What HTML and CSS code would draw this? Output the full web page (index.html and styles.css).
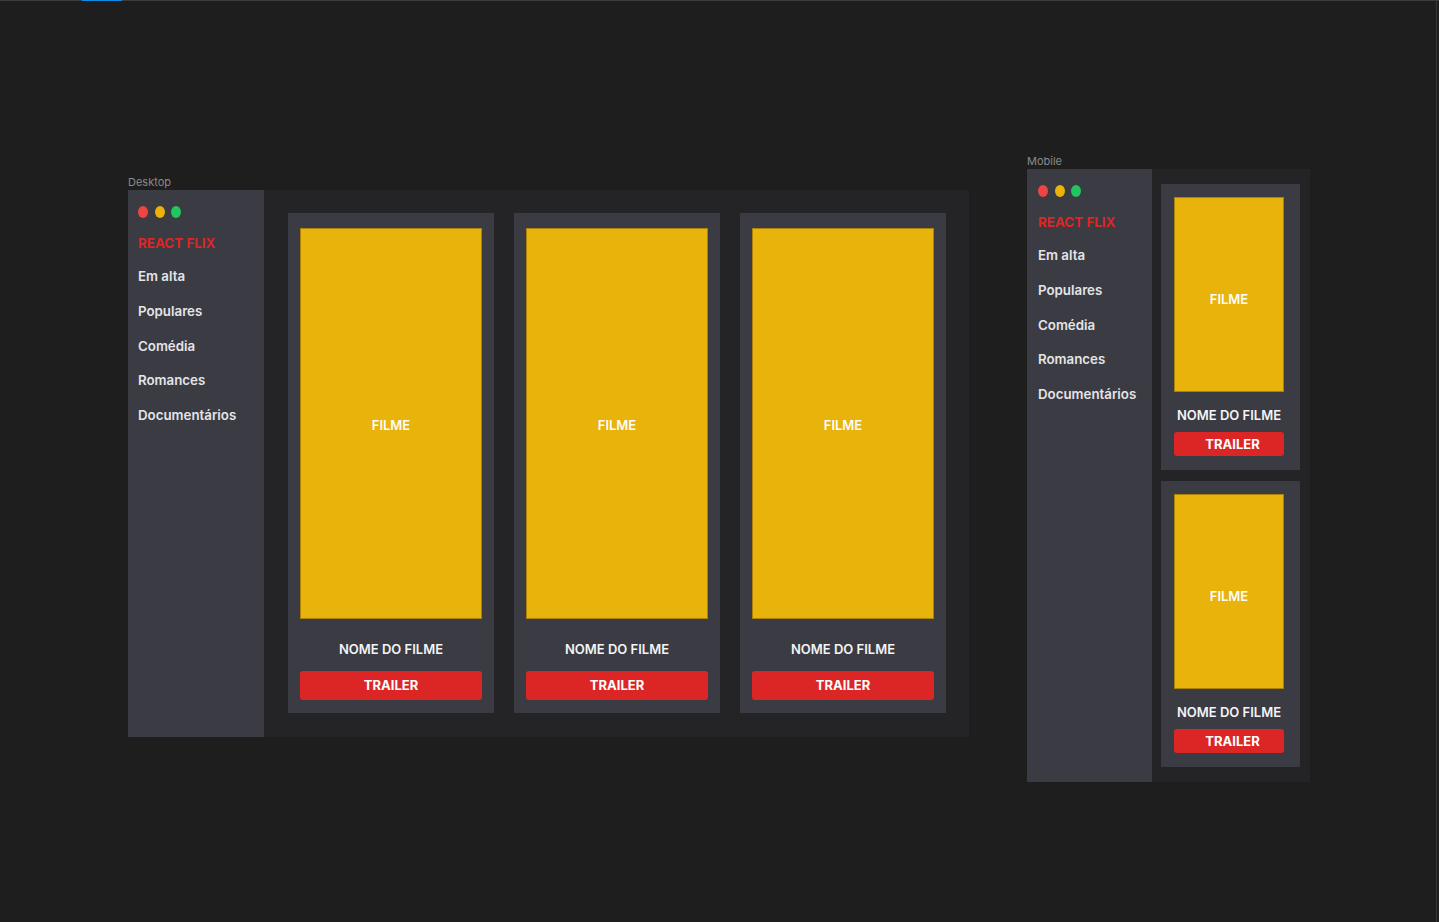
FILE: index.html
```html
<!DOCTYPE html>
<html lang="pt-BR">
<head>
<meta charset="utf-8">
<title>React Flix</title>
<link rel="stylesheet" href="styles.css">
</head>
<body>
<div class="topbar"><span class="topbar-active"></span></div>
<div class="edge-line"></div>
<div class="canvas">
  <section class="frame-wrap frame-wrap-desktop">
    <div class="frame-label">Desktop</div>
    <div class="frame frame-desktop">
      <aside class="sidebar">
        <div class="dots"><span class="dot dot-red"></span><span class="dot dot-yellow"></span><span class="dot dot-green"></span></div>
        <div class="brand">REACT FLIX</div>
        <nav class="menu">
          <a class="menu-item">Em alta</a>
          <a class="menu-item">Populares</a>
          <a class="menu-item">Comédia</a>
          <a class="menu-item">Romances</a>
          <a class="menu-item">Documentários</a>
        </nav>
      </aside>
      <main class="content content-desktop">
        <div class="card card-desktop">
          <div class="poster"><span>FILME</span></div>
          <div class="movie-name">NOME DO FILME</div>
          <button class="trailer">TRAILER</button>
        </div>
        <div class="card card-desktop">
          <div class="poster"><span>FILME</span></div>
          <div class="movie-name">NOME DO FILME</div>
          <button class="trailer">TRAILER</button>
        </div>
        <div class="card card-desktop">
          <div class="poster"><span>FILME</span></div>
          <div class="movie-name">NOME DO FILME</div>
          <button class="trailer">TRAILER</button>
        </div>
      </main>
    </div>
  </section>

  <section class="frame-wrap frame-wrap-mobile">
    <div class="frame-label">Mobile</div>
    <div class="frame frame-mobile">
      <aside class="sidebar sidebar-mobile">
        <div class="dots"><span class="dot dot-red"></span><span class="dot dot-yellow"></span><span class="dot dot-green"></span></div>
        <div class="brand">REACT FLIX</div>
        <nav class="menu">
          <a class="menu-item">Em alta</a>
          <a class="menu-item">Populares</a>
          <a class="menu-item">Comédia</a>
          <a class="menu-item">Romances</a>
          <a class="menu-item">Documentários</a>
        </nav>
      </aside>
      <main class="content content-mobile">
        <div class="card card-mobile">
          <div class="poster"><span>FILME</span></div>
          <div class="movie-name">NOME DO FILME</div>
          <button class="trailer">TRAILER</button>
        </div>
        <div class="card card-mobile">
          <div class="poster"><span>FILME</span></div>
          <div class="movie-name">NOME DO FILME</div>
          <button class="trailer">TRAILER</button>
        </div>
      </main>
    </div>
  </section>
</div>
</body>
</html>
```

FILE: styles.css
```css
* { box-sizing: border-box; }

html, body {
  margin: 0;
  padding: 0;
  background: #1e1e1e;
  width: 1439px;
  height: 922px;
  overflow: hidden;
  font-family: Inter, "Noto Sans", "Liberation Sans", sans-serif;
}

.topbar {
  height: 1px;
  background: #3d3d3d;
  position: relative;
}

.topbar-active {
  position: absolute;
  left: 82px;
  top: 0;
  width: 40px;
  height: 1px;
  background: #0c8ce9;
}

.edge-line {
  position: absolute;
  top: 0;
  left: 1436px;
  width: 1px;
  height: 922px;
  background: #383838;
}

.canvas {
  position: relative;
  height: 921px;
}

.frame-wrap {
  position: absolute;
}

.frame-wrap-desktop { left: 128px; top: 174px; }
.frame-wrap-mobile { left: 1027px; top: 153px; }

.frame-label {
  height: 15px;
  line-height: 15px;
  font-size: 11px;
  color: #8a8a8a;
  font-weight: 400;
}

.frame {
  display: flex;
  background: #242426;
}

.frame-desktop { width: 841px; height: 547px; }
.frame-mobile { width: 283px; height: 613px; }

.sidebar {
  width: 136px;
  flex: none;
  background: #3a3b43;
  padding: 16px 10px 0 10px;
  display: flex;
  flex-direction: column;
}

.sidebar-mobile { width: 125px; padding-left: 11px; }

.dots {
  display: flex;
  gap: 6.5px;
  height: 12px;
}

.dot {
  width: 10px;
  height: 12px;
  border-radius: 50%;
}

.dot-red { background: #ef4444; }
.dot-yellow { background: #eab308; }
.dot-green { background: #22c55e; }

.brand {
  margin-top: 15px;
  height: 20px;
  line-height: 20px;
  font-size: 13.4px;
  font-weight: 700;
  color: #dc2626;
}

.menu {
  margin-top: 13px;
  display: flex;
  flex-direction: column;
  gap: 14.75px;
}

.menu-item {
  height: 20px;
  line-height: 20px;
  font-size: 13.3px;
  font-weight: 600;
  color: #e4e4e7;
  white-space: nowrap;
}

.content { flex: 1; display: flex; }

.content-desktop {
  padding: 23px 23px 24px 24px;
  gap: 20px;
}

.content-mobile {
  flex-direction: column;
  padding: 15px 10px 15px 9px;
  gap: 11px;
}

.card {
  background: #3a3b43;
  display: flex;
  flex-direction: column;
  align-items: center;
}

.card-desktop {
  width: 206px;
  height: 500px;
  padding: 15px 12px 13px 12px;
}

.card-mobile {
  width: 139px;
  height: 286px;
  padding: 13px 16px 14px 13px;
}

.poster {
  width: 100%;
  background: #e8b30a;
  box-shadow: inset 0 0 0 1px rgba(60, 40, 0, 0.35);
  display: flex;
  align-items: center;
  justify-content: center;
  color: #fdfdfd;
  font-size: 13px;
  font-weight: 600;
}

.card-desktop .poster { height: 391px; padding-top: 3px; }
.card-mobile .poster { height: 195px; padding-top: 9px; }

.movie-name {
  height: 20px;
  line-height: 20px;
  font-size: 13px;
  font-weight: 600;
  color: #f4f4f5;
  white-space: nowrap;
}

.card-desktop .movie-name { margin-top: 20px; }
.card-mobile .movie-name { margin-top: 13px; }

.trailer {
  width: 100%;
  border: none;
  border-radius: 3px;
  background: #dc2626;
  color: #ffffff;
  font-family: inherit;
  font-size: 13px;
  font-weight: 700;
  padding: 0;
  cursor: pointer;
}

.card-desktop .trailer { margin-top: 12px; height: 29px; padding-bottom: 2px; }
.card-mobile .trailer { margin-top: 7px; height: 24px; padding-left: 7px; }
```
